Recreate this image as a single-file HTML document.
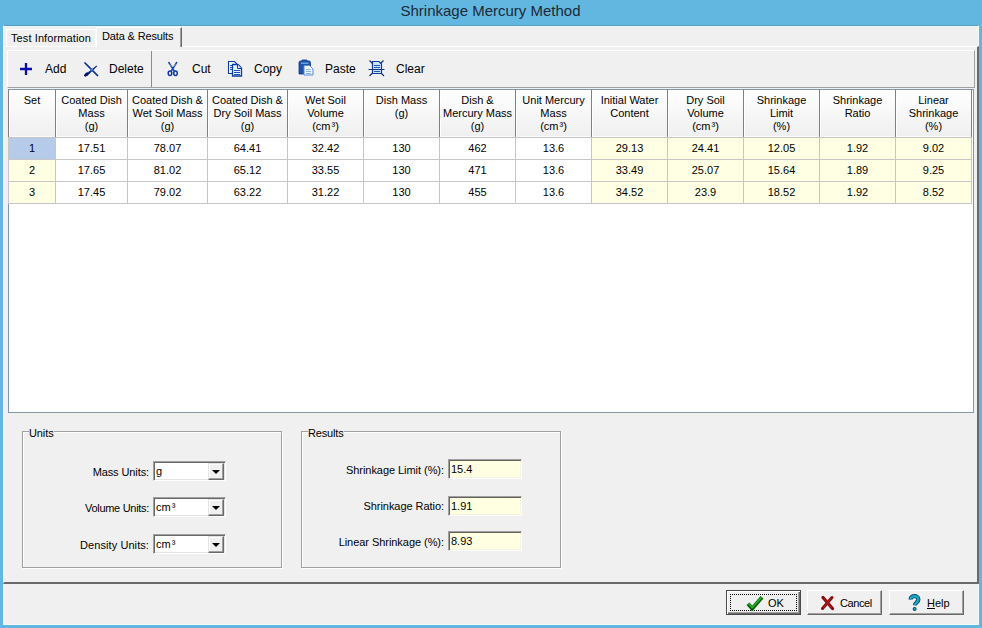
<!DOCTYPE html>
<html><head><meta charset="utf-8">
<style>
*{box-sizing:border-box;margin:0;padding:0}
html,body{width:982px;height:628px;overflow:hidden;background:#62b7e0;font-family:"Liberation Sans",sans-serif;font-size:11px;color:#000;position:relative}
.a{position:absolute}
#title{left:0;top:2px;width:982px;text-align:center;font-size:15px;color:#1b2a38;line-height:17px;padding-right:1px}
#client{left:3px;top:25px;width:976px;height:600px;background:#f0f0f0;border:1px solid #f0fafd;border-top-color:#5a9cba;box-shadow:inset 0 1px 0 #eaf9fd}
#page{left:3px;top:46px;width:976px;height:538px;border-top:1px solid #fff;border-left:1px solid #fff;border-right:2px solid #696969;border-bottom:2px solid #696969}
.tab{white-space:nowrap;line-height:13px;background:#f0f0f0}
#tab1{left:6px;top:29px;width:90px;height:17px;border-top:1px solid #fff;border-left:1px solid #fff;border-right:1px solid #fafafa;padding:2px 0 0 4px;letter-spacing:0.1px}
#tab2{left:96px;top:27px;width:86px;height:20px;border-top:1px solid #fff;border-left:1px solid #fff;border-right:1px solid #696969;box-shadow:inset -1px 0 0 #a0a0a0;padding:2px 0 0 5px;letter-spacing:-0.15px}
#toolbar{left:7px;top:50px;width:968px;height:38px;border-top:1px solid #fff;border-left:1px solid #fff;border-bottom:1px solid #a0a0a0;border-right:1px solid #a0a0a0}
#tbsep{left:151px;top:51px;width:1px;height:36px;background:#8c8c8c}
.tbt{position:absolute;top:62px;line-height:14px;white-space:nowrap;font-size:12px}
.ico{position:absolute}
#grid{left:8px;top:89px;width:966px;height:324px;background:#fff;border:1px solid #8497aa}
.hc{border:1px solid #808080;border-top-color:#8497aa;text-align:center;padding-top:4px;line-height:13px;background:linear-gradient(#ffffff,#efefef);box-shadow:inset 1px 0 0 #fff,inset 0 -1px 0 #fafafa;white-space:nowrap}
.dc{border:1px solid #c6c6c6;text-align:center;line-height:13px;padding-top:4px;background:#fff}
.dc.ylw{background:#ffffe4}
.dc.sel{background:#b6cbe9}
.grp{border:1px solid #a0a0a0;box-shadow:1px 1px 0 #fff, inset 1px 1px 0 #fff}
.glabel{background:#f0f0f0;line-height:13px;padding:0}
.lbl{text-align:right;line-height:13px;white-space:nowrap;letter-spacing:-0.3px}
.combo{background:#fff;border-top:1px solid #a0a0a0;border-left:1px solid #a0a0a0;border-right:1px solid #fff;border-bottom:1px solid #fff;box-shadow:inset 1px 1px 0 #696969,inset -1px -1px 0 #e3e3e3;line-height:13px;padding:3px 0 0 2px}
.dd{position:absolute;right:1px;top:1px;width:16px;height:17px;background:#f0f0f0;border-top:1px solid #e3e3e3;border-left:1px solid #e3e3e3;border-right:1px solid #696969;border-bottom:1px solid #696969;box-shadow:inset -1px -1px 0 #a0a0a0, inset 1px 1px 0 #fff}
.dd i{position:absolute;left:3px;top:6px;width:0;height:0;border-left:4px solid transparent;border-right:4px solid transparent;border-top:4px solid #000}
.edit{background:#ffffe1;border-top:1px solid #a0a0a0;border-left:1px solid #a0a0a0;border-right:1px solid #fff;border-bottom:1px solid #fff;box-shadow:inset 1px 1px 0 #646458,inset -1px -1px 0 #f6f6e0;line-height:13px;padding:3px 0 0 2px}
.btn{background:#f0f0f0;border-top:1px solid #fff;border-left:1px solid #fff;border-right:1px solid #696969;border-bottom:1px solid #696969;box-shadow:inset -1px -1px 0 #a0a0a0}
.btn.def{border:1px solid #4a4a4a;box-shadow:inset 1px 1px 0 #fff,inset -1px -1px 0 #696969,inset -2px -2px 0 #a0a0a0}
.bt{position:absolute;line-height:13px;white-space:nowrap}

</style></head><body>
<div class="a" id="title">Shrinkage Mercury Method</div>
<div class="a" id="client"></div>
<div class="a" id="page"></div>
<div class="a tab" id="tab1">Test Information</div>
<div class="a tab" id="tab2">Data &amp; Results</div>
<div class="a" id="toolbar"></div>
<div class="a" id="tbsep"></div>
<svg class="ico" style="left:19px;top:62px" width="14" height="14" viewBox="0 0 14 14"><path d="M7 1V13M1 7H13" stroke="#0c0cb4" stroke-width="2.3"/></svg>
<div class="tbt" style="left:45px">Add</div>
<svg class="ico" style="left:82px;top:60px" width="18" height="18" viewBox="0 0 18 18"><path d="M3 3L15.5 15.5" stroke="#0a2a8a" stroke-width="1.7" stroke-linecap="round"/><path d="M14.5 5.5L15.2 6.2L5 16.3L3.2 14.5Z" fill="#0a2690"/><path d="M3.3 15.3L5 13.6" stroke="#020e60" stroke-width="2.6" stroke-linecap="round"/><circle cx="9.6" cy="9.6" r="1.3" fill="#3a86e0"/></svg>
<div class="tbt" style="left:109px">Delete</div>
<svg class="ico" style="left:167px;top:61px" width="12" height="16" viewBox="0 0 12 16"><path d="M1.5 1L7.2 10M10 1L4.3 10" stroke="#1848b0" stroke-width="1.5"/><path d="M2.8 3.5L4.8 5.5M8.7 3.5L6.7 5.5" stroke="#8ab8ee" stroke-width="0.9"/><ellipse cx="3" cy="12.3" rx="1.8" ry="2.3" fill="none" stroke="#0c3aa8" stroke-width="1.5"/><ellipse cx="8.5" cy="12.3" rx="1.8" ry="2.3" fill="none" stroke="#0c3aa8" stroke-width="1.5"/></svg>
<div class="tbt" style="left:192px">Cut</div>
<svg class="ico" style="left:227px;top:60px" width="16" height="17" viewBox="0 0 16 17"><path d="M1.5 1.5H7.5L9.5 3.5V13.5H1.5Z" fill="#f4f9ff" stroke="#0f3c9c" stroke-width="1.1"/><path d="M3 5.5H6M3 7.5H6M3 9.5H6" stroke="#1a56b8" stroke-width="1"/><path d="M5.5 4.5H11L14.5 8V16H5.5Z" fill="#e6f2ff" stroke="#0f3c9c" stroke-width="1.3"/><path d="M10.5 4.5V8.5H14.5" fill="#cfe2fa" stroke="#0f3c9c" stroke-width="1"/><path d="M7 10.5H13M7 12.5H13M7 14.5H13" stroke="#1a56b8" stroke-width="1.1"/></svg>
<div class="tbt" style="left:254px">Copy</div>
<svg class="ico" style="left:298px;top:59px" width="17" height="17" viewBox="0 0 17 17"><path d="M1 3.5Q1 2 2.5 2H4V1H9V2H11Q12.5 2 12.5 3.5V15H1Z" fill="#1d54aa" stroke="#0e3a88" stroke-width="0.8"/><path d="M3 3.5H10.5V5H3Z" fill="#6a9ee0"/><path d="M6 6.5H11.5L15 10V16H6Z" fill="#f2f8ff" stroke="#5a8ad0" stroke-width="1"/><path d="M8 10.5H12.5M8 12.5H13M8 14.5H13" stroke="#8ab4e6" stroke-width="1"/></svg>
<div class="tbt" style="left:325px">Paste</div>
<svg class="ico" style="left:367px;top:59px" width="19" height="18" viewBox="0 0 19 18"><path d="M5.5 2.5H12L14.5 5V14.5H5.5Z" fill="#cfe4fb" stroke="#0f3c9c" stroke-width="1.2"/><path d="M7 6.5H13M7 8.5H13M7 10.5H13M7 12.5H13" stroke="#1a56b8" stroke-width="1"/><path d="M1.5 10.5H17.5" stroke="#15327a" stroke-width="1"/><path d="M2.5 1.5L5.5 4.5M16.5 1.5L13.5 4.5M2.5 17L5.5 14M17 17L14 14" stroke="#15327a" stroke-width="1.2"/></svg>
<div class="tbt" style="left:396px">Clear</div>
<div class="a" id="grid"></div>
<div class="a hc" style="left:8px;top:89px;width:48px;height:49px">Set</div>
<div class="a hc" style="left:55px;top:89px;width:73px;height:49px">Coated Dish<br>Mass<br>(g)</div>
<div class="a hc" style="left:127px;top:89px;width:81px;height:49px">Coated Dish &amp;<br>Wet Soil Mass<br>(g)</div>
<div class="a hc" style="left:207px;top:89px;width:81px;height:49px">Coated Dish &amp;<br>Dry Soil Mass<br>(g)</div>
<div class="a hc" style="left:287px;top:89px;width:77px;height:49px">Wet Soil<br>Volume<br>(cm<span style='margin-left:1px'>&sup3;</span>)</div>
<div class="a hc" style="left:363px;top:89px;width:77px;height:49px">Dish Mass<br>(g)</div>
<div class="a hc" style="left:439px;top:89px;width:77px;height:49px">Dish &amp;<br>Mercury Mass<br>(g)</div>
<div class="a hc" style="left:515px;top:89px;width:77px;height:49px">Unit Mercury<br>Mass<br>(cm<span style='margin-left:1px'>&sup3;</span>)</div>
<div class="a hc" style="left:591px;top:89px;width:77px;height:49px">Initial Water<br>Content</div>
<div class="a hc" style="left:667px;top:89px;width:77px;height:49px">Dry Soil<br>Volume<br>(cm<span style='margin-left:1px'>&sup3;</span>)</div>
<div class="a hc" style="left:743px;top:89px;width:77px;height:49px">Shrinkage<br>Limit<br>(%)</div>
<div class="a hc" style="left:819px;top:89px;width:77px;height:49px">Shrinkage<br>Ratio</div>
<div class="a hc" style="left:895px;top:89px;width:77px;height:49px">Linear<br>Shrinkage<br>(%)</div>
<div class="a dc sel" style="left:8px;top:137px;width:48px;height:23px"><span>1</span></div>
<div class="a dc" style="left:55px;top:137px;width:73px;height:23px"><span>17.51</span></div>
<div class="a dc" style="left:127px;top:137px;width:81px;height:23px"><span>78.07</span></div>
<div class="a dc" style="left:207px;top:137px;width:81px;height:23px"><span>64.41</span></div>
<div class="a dc" style="left:287px;top:137px;width:77px;height:23px"><span>32.42</span></div>
<div class="a dc" style="left:363px;top:137px;width:77px;height:23px"><span>130</span></div>
<div class="a dc" style="left:439px;top:137px;width:77px;height:23px"><span>462</span></div>
<div class="a dc" style="left:515px;top:137px;width:77px;height:23px"><span>13.6</span></div>
<div class="a dc ylw" style="left:591px;top:137px;width:77px;height:23px"><span>29.13</span></div>
<div class="a dc ylw" style="left:667px;top:137px;width:77px;height:23px"><span>24.41</span></div>
<div class="a dc ylw" style="left:743px;top:137px;width:77px;height:23px"><span>12.05</span></div>
<div class="a dc ylw" style="left:819px;top:137px;width:77px;height:23px"><span>1.92</span></div>
<div class="a dc ylw" style="left:895px;top:137px;width:77px;height:23px"><span>9.02</span></div>
<div class="a dc ylw" style="left:8px;top:159px;width:48px;height:23px"><span>2</span></div>
<div class="a dc" style="left:55px;top:159px;width:73px;height:23px"><span>17.65</span></div>
<div class="a dc" style="left:127px;top:159px;width:81px;height:23px"><span>81.02</span></div>
<div class="a dc" style="left:207px;top:159px;width:81px;height:23px"><span>65.12</span></div>
<div class="a dc" style="left:287px;top:159px;width:77px;height:23px"><span>33.55</span></div>
<div class="a dc" style="left:363px;top:159px;width:77px;height:23px"><span>130</span></div>
<div class="a dc" style="left:439px;top:159px;width:77px;height:23px"><span>471</span></div>
<div class="a dc" style="left:515px;top:159px;width:77px;height:23px"><span>13.6</span></div>
<div class="a dc ylw" style="left:591px;top:159px;width:77px;height:23px"><span>33.49</span></div>
<div class="a dc ylw" style="left:667px;top:159px;width:77px;height:23px"><span>25.07</span></div>
<div class="a dc ylw" style="left:743px;top:159px;width:77px;height:23px"><span>15.64</span></div>
<div class="a dc ylw" style="left:819px;top:159px;width:77px;height:23px"><span>1.89</span></div>
<div class="a dc ylw" style="left:895px;top:159px;width:77px;height:23px"><span>9.25</span></div>
<div class="a dc ylw" style="left:8px;top:181px;width:48px;height:23px"><span>3</span></div>
<div class="a dc" style="left:55px;top:181px;width:73px;height:23px"><span>17.45</span></div>
<div class="a dc" style="left:127px;top:181px;width:81px;height:23px"><span>79.02</span></div>
<div class="a dc" style="left:207px;top:181px;width:81px;height:23px"><span>63.22</span></div>
<div class="a dc" style="left:287px;top:181px;width:77px;height:23px"><span>31.22</span></div>
<div class="a dc" style="left:363px;top:181px;width:77px;height:23px"><span>130</span></div>
<div class="a dc" style="left:439px;top:181px;width:77px;height:23px"><span>455</span></div>
<div class="a dc" style="left:515px;top:181px;width:77px;height:23px"><span>13.6</span></div>
<div class="a dc ylw" style="left:591px;top:181px;width:77px;height:23px"><span>34.52</span></div>
<div class="a dc ylw" style="left:667px;top:181px;width:77px;height:23px"><span>23.9</span></div>
<div class="a dc ylw" style="left:743px;top:181px;width:77px;height:23px"><span>18.52</span></div>
<div class="a dc ylw" style="left:819px;top:181px;width:77px;height:23px"><span>1.92</span></div>
<div class="a dc ylw" style="left:895px;top:181px;width:77px;height:23px"><span>8.52</span></div>
<div class="a grp" style="left:22px;top:431px;width:260px;height:137px"></div>
<div class="a glabel" style="left:29px;top:427px;letter-spacing:-0.1px">Units</div>
<div class="a lbl" style="left:40px;top:466px;width:109px;letter-spacing:-0.1px">Mass Units:</div>
<div class="a combo" style="left:153px;top:461px;width:73px;height:20px">g<div class="dd"><i></i></div></div>
<div class="a lbl" style="left:40px;top:502px;width:109px">Volume Units:</div>
<div class="a combo" style="left:153px;top:497px;width:73px;height:20px">cm<span style="margin-left:1px">&sup3;</span><div class="dd"><i></i></div></div>
<div class="a lbl" style="left:40px;top:539px;width:109px;letter-spacing:0.08px">Density Units:</div>
<div class="a combo" style="left:153px;top:534px;width:73px;height:20px">cm<span style="margin-left:1px">&sup3;</span><div class="dd"><i></i></div></div>

<div class="a grp" style="left:301px;top:431px;width:260px;height:137px"></div>
<div class="a glabel" style="left:308px;top:427px;letter-spacing:-0.15px">Results</div>
<div class="a lbl" style="left:300px;top:464px;width:144px;letter-spacing:-0.05px">Shrinkage Limit (%):</div>
<div class="a edit" style="left:448px;top:459px;width:74px;height:20px">15.4</div>
<div class="a lbl" style="left:300px;top:500px;width:144px;letter-spacing:-0.05px">Shrinkage Ratio:</div>
<div class="a edit" style="left:448px;top:496px;width:74px;height:20px">1.91</div>
<div class="a lbl" style="left:300px;top:536px;width:144px;letter-spacing:-0.05px">Linear Shrinkage (%):</div>
<div class="a edit" style="left:448px;top:531px;width:74px;height:20px">8.93</div>

<div class="a btn def" style="left:726px;top:590px;width:75px;height:25px"></div>
<div class="a" style="left:730px;top:594px;width:67px;height:17px;border:1px dotted #000"></div>
<svg class="ico" style="left:746px;top:595px" width="18" height="16" viewBox="0 0 18 16"><path d="M2 8.8L6.2 13.6L16 2.2" fill="none" stroke="#085808" stroke-width="3.8" stroke-linejoin="miter"/><path d="M2.6 8.6L6.2 12.6L15.4 2.4" fill="none" stroke="#22b422" stroke-width="1.6"/></svg>
<div class="bt" style="left:768px;top:597px">OK</div>
<div class="a btn" style="left:807px;top:590px;width:75px;height:25px"></div>
<svg class="ico" style="left:820px;top:595px" width="15" height="16" viewBox="0 0 15 16"><path d="M3 2.5L12.5 13.5" stroke="#8a0808" stroke-width="3.3" stroke-linecap="round"/><path d="M12 2.5L2.5 13.5" stroke="#8a0808" stroke-width="3" stroke-linecap="round"/><path d="M4 3.5L11.5 12.5M11 3.5L3.5 12.5" stroke="#b83030" stroke-width="0.8"/></svg>
<div class="bt" style="left:840px;top:597px;letter-spacing:-0.4px">Cancel</div>
<div class="a btn" style="left:889px;top:590px;width:75px;height:25px"></div>
<svg class="ico" style="left:907px;top:594px" width="14" height="18" viewBox="0 0 14 18"><path d="M3.6 5.6C3.6 3 5.5 2.2 7.4 2.2C9.8 2.2 11.4 3.5 11.4 5.4C11.4 8 8.3 8.5 7.9 11.3" fill="none" stroke="#0b4a66" stroke-width="4.2"/><path d="M3.6 5.6C3.6 3 5.5 2.2 7.4 2.2C9.8 2.2 11.4 3.5 11.4 5.4C11.4 8 8.3 8.5 7.9 11.3" fill="none" stroke="#1ba6c6" stroke-width="2.4"/><circle cx="7.6" cy="15" r="2" fill="#0b4a66"/><circle cx="7.6" cy="15" r="1.1" fill="#1ba6c6"/></svg>
<div class="bt" style="left:927px;top:597px"><u>H</u>elp</div>
</body></html>
